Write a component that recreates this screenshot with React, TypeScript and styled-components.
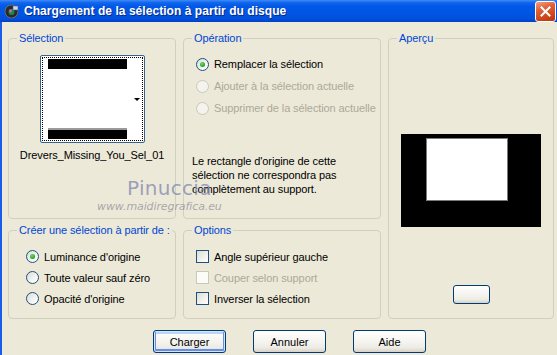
import React from 'react';
import styled, { createGlobalStyle, css } from 'styled-components';

const GlobalStyle = createGlobalStyle`
  html, body {
    margin: 0;
    padding: 0;
    background: #ece9d8;
  }
  body {
    font-family: "Liberation Sans", Arial, sans-serif;
    font-size: 11px;
    letter-spacing: -0.1px;
    color: #000;
  }
`;

const Window = styled.div`
  position: relative;
  width: 557px;
  height: 355px;
  display: flex;
  flex-direction: column;
  overflow: hidden;
`;

const TitleBar = styled.div`
  height: 22px;
  display: flex;
  align-items: center;
  padding: 0 1px 0 4px;
  background: linear-gradient(180deg, #3d8cf5 0%, #1265ee 12%, #0058e6 30%, #0055e3 60%, #0050dc 85%, #0040c4 100%);
`;

const TitleText = styled.div`
  flex: 1;
  margin-left: 5px;
  font-family: "Liberation Sans", Arial, sans-serif;
  font-weight: bold;
  font-size: 12px;
  letter-spacing: 0.05px;
  color: #fff;
  text-shadow: 1px 1px 0 #0a2a8a;
  white-space: nowrap;
`;

const CloseButton = styled.div`
  width: 19px;
  height: 19px;
  border: 1px solid #fff;
  border-radius: 3px;
  background: linear-gradient(160deg, #f0a080 0%, #e0603a 35%, #cc4418 75%, #b8340c 100%);
  display: flex;
  align-items: center;
  justify-content: center;
`;

const Body = styled.div`
  flex: 1;
  border-left: 2px solid #1a5ce8;
  padding: 16px 0 0 6px;
  background: #ece9d8;
`;

const Grid = styled.div`
  display: grid;
  grid-template-columns: 168px 198px 166px;
  grid-template-rows: 181px 89px;
  column-gap: 7px;
  row-gap: 11px;
`;

const Group = styled.div<{ $col: number; $row: string }>`
  position: relative;
  border: 1px solid #d0d0bf;
  border-radius: 4px;
  display: flex;
  flex-direction: column;
  grid-column: ${({ $col }) => $col};
  grid-row: ${({ $row }) => $row};
`;

const Legend = styled.span`
  position: absolute;
  top: -7px;
  left: 8px;
  padding: 0 2px;
  background: #ece9d8;
  color: #0046d5;
  line-height: 13px;
  white-space: nowrap;
`;

const SelectionGroup = styled(Group)`
  align-items: center;
  padding-top: 16px;
`;

const ThumbFrame = styled.div`
  width: 101px;
  height: 84px;
  border: 1px solid #35628f;
  border-radius: 2px;
  padding: 1px;
  background: #fff;
`;

const ThumbInner = styled.div`
  height: 100%;
  box-sizing: border-box;
  border: 1px dotted #000;
  display: flex;
  padding: 1px 0 1px 5px;
`;

const ThumbImage = styled.div`
  width: 79px;
  display: flex;
  flex-direction: column;
`;

const Band = styled.div<{ $h: number }>`
  height: ${({ $h }) => $h}px;
  background: #000;
`;

const WhiteArea = styled.div`
  flex: 1;
  background: #fff;
  border-bottom: 2px solid #9a9a9a;
`;

const ThumbSide = styled.div`
  flex: 1;
  display: flex;
  align-items: center;
  justify-content: flex-end;
  padding-right: 2px;
`;

const Arrow = styled.div`
  width: 0;
  height: 0;
  border-left: 3px solid transparent;
  border-right: 3px solid transparent;
  border-top: 3px solid #000;
`;

const FileName = styled.div`
  margin-top: 6px;
  line-height: 13px;
`;

const OperationGroup = styled(Group)`
  padding: 14px 0 0 12px;
`;

const OptionRow = styled.label<{ $disabled?: boolean; $h?: number }>`
  display: flex;
  align-items: center;
  height: ${({ $h }) => $h || 22}px;
  color: ${({ $disabled }) => ($disabled ? '#aca899' : '#000')};
  white-space: nowrap;
`;

const Radio = styled.span<{ $checked?: boolean; $disabled?: boolean }>`
  position: relative;
  width: 11px;
  height: 11px;
  margin-right: 5px;
  border-radius: 50%;
  border: 1px solid ${({ $disabled }) => ($disabled ? '#cac8bb' : '#1c5180')};
  background: ${({ $disabled }) =>
    $disabled ? '#f4f3ee' : 'linear-gradient(135deg, #dcdcd7 0%, #f4f4f0 60%, #ffffff 100%)'};
  flex-shrink: 0;
  ${({ $checked }) =>
    $checked &&
    css`
      &::after {
        content: '';
        position: absolute;
        left: 3px;
        top: 3px;
        width: 5px;
        height: 5px;
        border-radius: 50%;
        background: radial-gradient(circle at 40% 35%, #6be068 0%, #2aa82a 60%, #1a8a1a 100%);
      }
    `}
`;

const Check = styled.span<{ $disabled?: boolean }>`
  width: 11px;
  height: 11px;
  margin-right: 5px;
  border: 1px solid ${({ $disabled }) => ($disabled ? '#cac8bb' : '#1c5180')};
  background: ${({ $disabled }) =>
    $disabled ? '#fbfbf8' : 'linear-gradient(135deg, #dcdcd7 0%, #efefea 50%, #ffffff 100%)'};
  flex-shrink: 0;
`;

const Note = styled.p`
  margin: 35px 0 0 -4px;
  line-height: 14px;
`;

const PreviewGroup = styled(Group)`
  align-items: center;
  padding-top: 95px;
`;

const PreviewBlack = styled.div`
  width: 140px;
  height: 93px;
  background: #000;
  padding: 4px 0 0 25px;
  box-sizing: border-box;
`;

const PreviewWhite = styled.div`
  width: 82px;
  height: 63px;
  box-sizing: border-box;
  background: #fff;
  border: 1px solid #7a7a7a;
`;

const CreateGroup = styled(Group)`
  padding: 15px 0 0 17px;
`;

const OptionsGroup = styled(Group)`
  padding: 15px 0 0 12px;
`;

const ButtonRow = styled.div`
  display: flex;
  gap: 27px;
  margin-top: 11px;
  padding-left: 145px;
`;

const Button = styled.button<{ $default?: boolean; $w?: number; $h?: number; $mt?: number }>`
  width: ${({ $w }) => $w || 73}px;
  height: ${({ $h }) => $h || 23}px;
  margin-top: ${({ $mt }) => $mt || 0}px;
  padding: 0;
  border: 1px solid #003c74;
  border-radius: 3px;
  font-family: "Liberation Sans", Arial, sans-serif;
  font-size: 11px;
  color: #000;
  background: linear-gradient(180deg, #ffffff 0%, #f6f5f1 45%, #ecebe4 80%, #d8d2c6 100%);
  ${({ $default }) =>
    $default &&
    css`
      box-shadow: inset 0 0 0 1px #cee7ff, inset 0 -1px 0 2px #6a8fe0, inset 0 1px 0 2px #bcd4f6;
    `}
`;

/* watermark stamped over the screenshot */
const Watermark = styled.div`
  position: absolute;
  left: 97px;
  top: 176px;
  display: flex;
  flex-direction: column;
  pointer-events: none;
`;

const WatermarkName = styled.div`
  margin-left: 30px;
  font-family: "DejaVu Sans", sans-serif;
  font-size: 20px;
  line-height: 24px;
  color: rgba(128, 134, 175, 0.75);
  letter-spacing: 0.3px;
`;

const WatermarkUrl = styled.div`
  font-family: "DejaVu Sans", sans-serif;
  font-style: italic;
  font-size: 11px;
  color: rgba(120, 120, 135, 0.6);
`;

const TitleIcon = () => (
  <svg width="15" height="15" viewBox="0 0 15 15">
    <circle cx="7.5" cy="7.5" r="6.5" fill="#2a2a2e" stroke="#6a6a70" strokeWidth="1" />
    <circle cx="7.5" cy="8" r="3" fill="#1a8a4a" />
    <circle cx="6.5" cy="7" r="1.4" fill="#e060a0" />
    <rect x="9" y="2" width="5" height="4" fill="#c8d8f0" stroke="#506080" strokeWidth="0.6" />
  </svg>
);

const App: React.FC = () => {
  return (
    <Window>
      <GlobalStyle />
      <TitleBar>
        <TitleIcon />
        <TitleText>Chargement de la sélection à partir du disque</TitleText>
        <CloseButton>
          <svg width="11" height="11" viewBox="0 0 11 11">
            <path d="M1.5 1.5 L9.5 9.5 M9.5 1.5 L1.5 9.5" stroke="#fff" strokeWidth="2" strokeLinecap="square" />
          </svg>
        </CloseButton>
      </TitleBar>
      <Body>
        <Grid>
          <SelectionGroup $col={1} $row="1">
            <Legend>Sélection</Legend>
            <ThumbFrame>
              <ThumbInner>
                <ThumbImage>
                  <Band $h={10} />
                  <WhiteArea />
                  <Band $h={9} />
                </ThumbImage>
                <ThumbSide>
                  <Arrow />
                </ThumbSide>
              </ThumbInner>
            </ThumbFrame>
            <FileName>Drevers_Missing_You_Sel_01</FileName>
          </SelectionGroup>

          <OperationGroup $col={2} $row="1">
            <Legend>Opération</Legend>
            <OptionRow>
              <Radio $checked />
              Remplacer la sélection
            </OptionRow>
            <OptionRow $disabled>
              <Radio $disabled />
              Ajouter à la sélection actuelle
            </OptionRow>
            <OptionRow $disabled>
              <Radio $disabled />
              Supprimer de la sélection actuelle
            </OptionRow>
            <Note>
              Le rectangle d'origine de cette
              <br />
              sélection ne correspondra pas
              <br />
              complètement au support.
            </Note>
          </OperationGroup>

          <PreviewGroup $col={3} $row="1 / span 2">
            <Legend>Aperçu</Legend>
            <PreviewBlack>
              <PreviewWhite />
            </PreviewBlack>
            <Button $w={37} $h={19} $mt={58} aria-label="preview" />
          </PreviewGroup>

          <CreateGroup $col={1} $row="2">
            <Legend>Créer une sélection à partir de :</Legend>
            <OptionRow $h={21}>
              <Radio $checked />
              Luminance d'origine
            </OptionRow>
            <OptionRow $h={21}>
              <Radio />
              Toute valeur sauf zéro
            </OptionRow>
            <OptionRow $h={21}>
              <Radio />
              Opacité d'origine
            </OptionRow>
          </CreateGroup>

          <OptionsGroup $col={2} $row="2">
            <Legend>Options</Legend>
            <OptionRow $h={21}>
              <Check />
              Angle supérieur gauche
            </OptionRow>
            <OptionRow $h={21} $disabled>
              <Check $disabled />
              Couper selon support
            </OptionRow>
            <OptionRow $h={21}>
              <Check />
              Inverser la sélection
            </OptionRow>
          </OptionsGroup>
        </Grid>
        <ButtonRow>
          <Button $default>Charger</Button>
          <Button>Annuler</Button>
          <Button>Aide</Button>
        </ButtonRow>
      </Body>
      <Watermark>
        <WatermarkName>Pinuccia</WatermarkName>
        <WatermarkUrl>www.maidiregrafica.eu</WatermarkUrl>
      </Watermark>
    </Window>
  );
};

export default App;
